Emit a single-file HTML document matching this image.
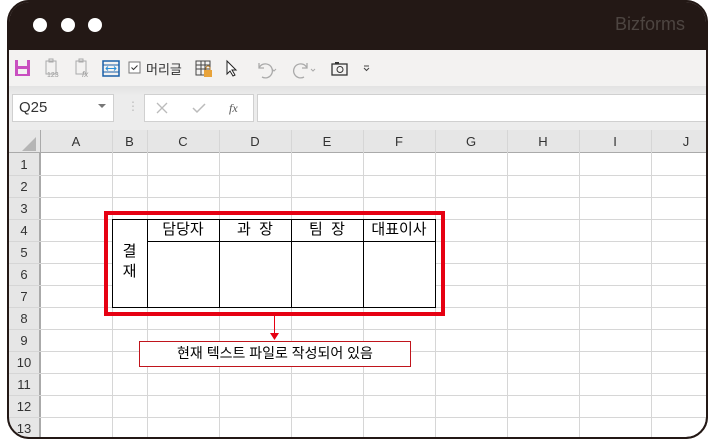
<!DOCTYPE html>
<html><head><meta charset="utf-8">
<style>
*{margin:0;padding:0;box-sizing:border-box}
body{width:715px;height:440px;background:#fff;position:relative;overflow:hidden;font-family:"Liberation Sans","Noto Sans CJK KR",sans-serif}
.a{position:absolute}
.win{left:7px;top:0;width:701px;height:439px;border:2px solid #231815;border-radius:22px;overflow:hidden;background:#fff}
.hl{position:absolute;background:#d6d6d6}
.ch{position:absolute;top:130px;height:23px;font-size:13px;color:#333;text-align:center;line-height:23px}
.rh{position:absolute;left:8px;width:32px;height:22px;font-size:13px;color:#333;text-align:center;line-height:23px}
.k{font-family:"Liberation Sans","Noto Sans CJK KR",sans-serif;font-size:15px;color:#000}
</style></head><body>
<div class="a win">
 <div class="a" style="left:0;top:0;width:700px;height:48px;background:#231815"></div>
 <div class="a" style="left:0;top:48px;width:700px;height:36px;background:#f3f2f1"></div>
 <div class="a" style="left:0;top:84px;width:700px;height:46px;background:linear-gradient(#e2e2e2,#ececec 10px,#ececec)"></div>
</div>
<div class="a" style="left:33px;top:18px;width:14px;height:14px;border-radius:50%;background:#fff"></div>
<div class="a" style="left:61px;top:18px;width:14px;height:14px;border-radius:50%;background:#fff"></div>
<div class="a" style="left:88px;top:18px;width:14px;height:14px;border-radius:50%;background:#fff"></div>
<div class="a" style="left:615px;top:14px;font-size:18px;color:#4d4541">Bizforms</div>

<svg class="a" style="left:14px;top:58px" width="170" height="22">
 <rect x="1" y="2" width="15" height="16" fill="#c94fc0"/><rect x="4" y="2" width="9" height="6" fill="#f3f2f1"/><rect x="4" y="11" width="9" height="5" fill="#f3f2f1"/>
 <g stroke="#aaa" fill="none"><rect x="32" y="3" width="10" height="13"/><rect x="35" y="1" width="4" height="3"/></g>
 <text x="33" y="19" font-size="7" fill="#999">123</text>
 <g stroke="#aaa" fill="none"><rect x="62" y="3" width="10" height="13"/><rect x="65" y="1" width="4" height="3"/></g>
 <text x="68" y="19" font-size="8" font-style="italic" fill="#999">fx</text>
 <rect x="89" y="3" width="16" height="15" fill="none" stroke="#1a5fa8" stroke-width="1.5"/><line x1="89" y1="7" x2="105" y2="7" stroke="#1a5fa8"/><line x1="89" y1="14" x2="105" y2="14" stroke="#1a5fa8"/>
 <path d="M92 10.5h10M94 8.5l-2 2 2 2M100 8.5l2 2-2 2" stroke="#2a8fd8" fill="none"/>
 <rect x="115" y="4" width="11" height="11" fill="#fff" stroke="#777"/><path d="M117.5 9.5l2 2 4-4" stroke="#333" fill="none"/>
</svg>
<div class="a" style="left:146px;top:59px;font-size:13px;color:#333">머리글</div>
<svg class="a" style="left:194px;top:58px" width="190" height="22">
 <g stroke="#444" fill="none"><rect x="2" y="3" width="14" height="14"/><path d="M2 7h14M2 11h14M7 3v14M11 3v14"/></g>
 <rect x="10" y="12" width="8" height="7" fill="#e8a33a"/><path d="M12 12v-2a2 2 0 0 1 4 0v2" stroke="#b87a20" fill="none"/>
 <path d="M33 3v13l3-3 3 5 2-1-3-5h4z" fill="#fff" stroke="#222"/>
 <path d="M65 5v5h5M65 10a7 7 0 1 1 3 9" stroke="#aaa" fill="none" stroke-width="1.3"/><path d="M78 11l2 2 2-2" stroke="#aaa" fill="none"/>
 <path d="M113 5v5h-5M113 10a7 7 0 1 0 -3 9" stroke="#aaa" fill="none" stroke-width="1.3"/><path d="M117 11l2 2 2-2" stroke="#aaa" fill="none"/>
 <rect x="138" y="6" width="15" height="11" fill="none" stroke="#333" stroke-width="1.3"/><circle cx="146" cy="11.5" r="3" fill="none" stroke="#333"/><rect x="141" y="4" width="4" height="2" fill="#333"/>
 <path d="M170 8h5M170 10l2.5 2.5 2.5-2.5" stroke="#444" fill="none"/>
</svg>

<div class="a" style="left:12px;top:94px;width:102px;height:28px;background:#fff;border:1px solid #d0d0d0"></div>
<div class="a" style="left:19px;top:99px;font-size:15px;color:#333">Q25</div>
<svg class="a" style="left:98px;top:104px" width="10" height="6"><path d="M0 0h8l-4 4z" fill="#777"/></svg>
<div class="a" style="left:127px;top:99px;font-size:12px;color:#bbb">⋮</div>
<div class="a" style="left:144px;top:94px;width:110px;height:28px;background:#fff;border:1px solid #d0d0d0"></div>
<svg class="a" style="left:155px;top:101px" width="95" height="14"><path d="M2 2l10 10M12 2L2 12" stroke="#bbb" stroke-width="1.3"/><path d="M38 7l4 4 8-8" stroke="#bbb" stroke-width="1.5" fill="none"/><text x="74" y="11" font-size="12" font-style="italic" font-family="Liberation Serif" fill="#555">fx</text></svg>
<div class="a" style="left:257px;top:94px;width:450px;height:28px;background:#fff;border:1px solid #d0d0d0"></div>

<div class="a" style="left:9px;top:130px;width:698px;height:23px;background:#e6e6e6;border-bottom:1px solid #aaa"></div>
<div class="a" style="left:9px;top:153px;width:31px;height:284px;background:#e6e6e6;border-right:1px solid #aaa"></div>
<svg class="a" style="left:21px;top:136px" width="16" height="16"><path d="M15 1V15H1z" fill="#b5b5b5"/></svg>
<div class="ch" style="left:40px;width:72px">A</div>
<div class="ch" style="left:112px;width:35px">B</div>
<div class="ch" style="left:147px;width:72px">C</div>
<div class="ch" style="left:219px;width:72px">D</div>
<div class="ch" style="left:291px;width:72px">E</div>
<div class="ch" style="left:363px;width:72px">F</div>
<div class="ch" style="left:435px;width:72px">G</div>
<div class="ch" style="left:507px;width:72px">H</div>
<div class="ch" style="left:579px;width:72px">I</div>
<div class="ch" style="left:651px;width:72px;padding-right:2px">J</div>

<div class="hl" style="left:112px;top:130px;width:1px;height:307px"></div>
<div class="hl" style="left:147px;top:130px;width:1px;height:307px"></div>
<div class="hl" style="left:219px;top:130px;width:1px;height:307px"></div>
<div class="hl" style="left:291px;top:130px;width:1px;height:307px"></div>
<div class="hl" style="left:363px;top:130px;width:1px;height:307px"></div>
<div class="hl" style="left:435px;top:130px;width:1px;height:307px"></div>
<div class="hl" style="left:507px;top:130px;width:1px;height:307px"></div>
<div class="hl" style="left:579px;top:130px;width:1px;height:307px"></div>
<div class="hl" style="left:651px;top:130px;width:1px;height:307px"></div>
<div class="hl" style="left:40px;top:130px;width:1px;height:307px;background:#aaa"></div>

<div class="hl" style="left:9px;top:175px;width:698px;height:1px"></div>
<div class="hl" style="left:9px;top:197px;width:698px;height:1px"></div>
<div class="hl" style="left:9px;top:219px;width:698px;height:1px"></div>
<div class="hl" style="left:9px;top:241px;width:698px;height:1px"></div>
<div class="hl" style="left:9px;top:263px;width:698px;height:1px"></div>
<div class="hl" style="left:9px;top:285px;width:698px;height:1px"></div>
<div class="hl" style="left:9px;top:307px;width:698px;height:1px"></div>
<div class="hl" style="left:9px;top:329px;width:698px;height:1px"></div>
<div class="hl" style="left:9px;top:351px;width:698px;height:1px"></div>
<div class="hl" style="left:9px;top:373px;width:698px;height:1px"></div>
<div class="hl" style="left:9px;top:395px;width:698px;height:1px"></div>
<div class="hl" style="left:9px;top:417px;width:698px;height:1px"></div>

<div class="rh" style="top:153px">1</div><div class="rh" style="top:175px">2</div><div class="rh" style="top:197px">3</div>
<div class="rh" style="top:219px">4</div><div class="rh" style="top:241px">5</div><div class="rh" style="top:263px">6</div>
<div class="rh" style="top:285px">7</div><div class="rh" style="top:307px">8</div><div class="rh" style="top:329px">9</div>
<div class="rh" style="top:351px">10</div><div class="rh" style="top:373px">11</div><div class="rh" style="top:395px">12</div>
<div class="rh" style="top:417px">13</div>

<div class="a" style="left:112px;top:219px;width:324px;height:89px;background:#fff;border:1px solid #000"></div>
<div class="a" style="left:147px;top:219px;width:1px;height:89px;background:#000"></div>
<div class="a" style="left:219px;top:219px;width:1px;height:89px;background:#000"></div>
<div class="a" style="left:291px;top:219px;width:1px;height:89px;background:#000"></div>
<div class="a" style="left:363px;top:219px;width:1px;height:89px;background:#000"></div>
<div class="a" style="left:147px;top:241px;width:289px;height:1px;background:#000"></div>
<div class="a k" style="left:147px;top:219px;width:72px;text-align:center;line-height:21px">담당자</div>
<div class="a k" style="left:219px;top:219px;width:72px;text-align:center;line-height:21px">과&nbsp; 장</div>
<div class="a k" style="left:291px;top:219px;width:72px;text-align:center;line-height:21px">팀&nbsp; 장</div>
<div class="a k" style="left:363px;top:219px;width:72px;text-align:center;line-height:21px">대표이사</div>
<div class="a k" style="left:112px;top:242px;width:35px;text-align:center;line-height:20px">결<br>재</div>

<div class="a" style="left:104px;top:211px;width:341px;height:105px;border:4px solid #e60012"></div>
<div class="a" style="left:274px;top:315px;width:1px;height:20px;background:#e60012"></div>
<svg class="a" style="left:270px;top:333px" width="10" height="8"><path d="M0 0h9l-4.5 7z" fill="#e60012"/></svg>
<div class="a" style="left:139px;top:341px;width:272px;height:26px;background:#fff;border:1px solid #c0141c"></div>
<div class="a k" style="left:139px;top:341px;width:272px;text-align:center;line-height:25px;font-size:14px">현재 텍스트 파일로 작성되어 있음</div>

<div class="a" style="left:7px;top:0;width:701px;height:439px;border:2px solid #231815;border-radius:22px;pointer-events:none;box-shadow:0 0 0 30px #fff"></div>
</body></html>
